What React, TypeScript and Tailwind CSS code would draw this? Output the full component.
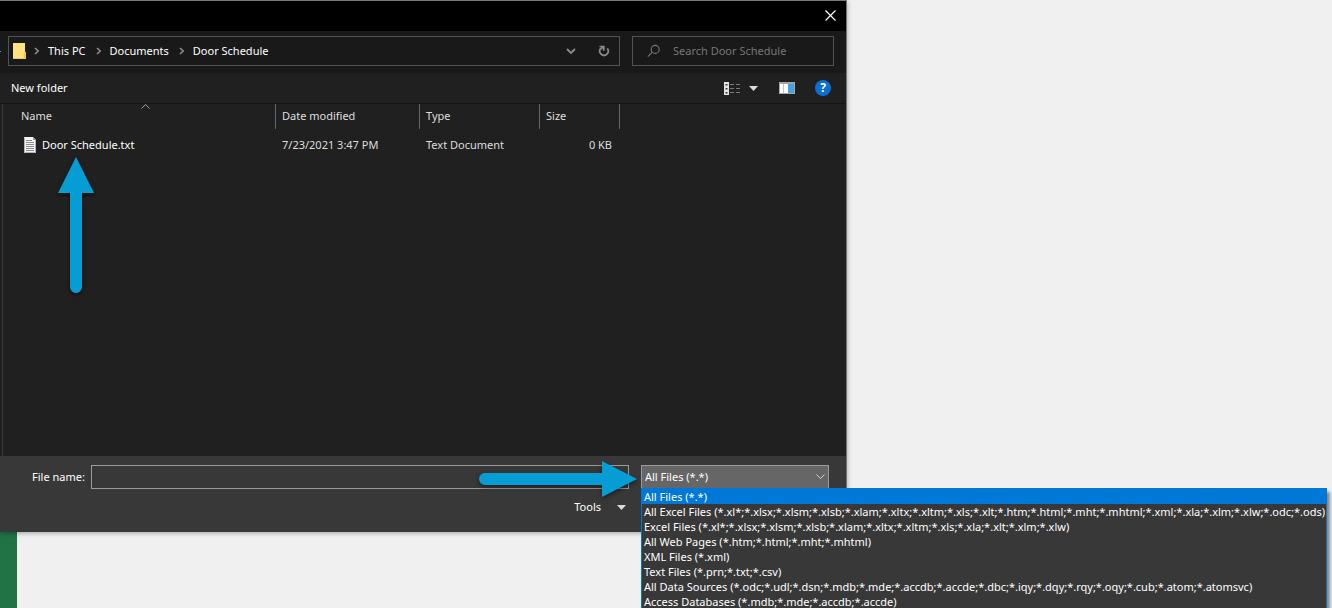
import React, { useState } from 'react';

const fileTypes = [
  'All Files (*.*)',
  'All Excel Files (*.xl*;*.xlsx;*.xlsm;*.xlsb;*.xlam;*.xltx;*.xltm;*.xls;*.xlt;*.htm;*.html;*.mht;*.mhtml;*.xml;*.xla;*.xlm;*.xlw;*.odc;*.ods)',
  'Excel Files (*.xl*;*.xlsx;*.xlsm;*.xlsb;*.xlam;*.xltx;*.xltm;*.xls;*.xla;*.xlt;*.xlm;*.xlw)',
  'All Web Pages (*.htm;*.html;*.mht;*.mhtml)',
  'XML Files (*.xml)',
  'Text Files (*.prn;*.txt;*.csv)',
  'All Data Sources (*.odc;*.udl;*.dsn;*.mdb;*.mde;*.accdb;*.accde;*.dbc;*.iqy;*.dqy;*.rqy;*.oqy;*.cub;*.atom;*.atomsvc)',
  'Access Databases (*.mdb;*.mde;*.accdb;*.accde)',
];

const files = [
  { name: 'Door Schedule.txt', modified: '7/23/2021 3:47 PM', type: 'Text Document', size: '0 KB' },
];

const path = ['This PC', 'Documents', 'Door Schedule'];

function Chevron() {
  return (
    <svg className="w-[6px] h-2 shrink-0" viewBox="0 0 6 8" fill="none" stroke="#8c8c8c" strokeWidth="1.6">
      <path d="M1 1l3.2 3L1 7" />
    </svg>
  );
}

function Triangle() {
  return (
    <svg className="w-[9px] h-[5px]" viewBox="0 0 9 5" fill="#dcdcdc">
      <path d="M0 0h9L4.5 5z" />
    </svg>
  );
}

function FolderIcon() {
  return (
    <svg className="w-[13px] h-4 shrink-0" viewBox="0 0 13 16">
      <path d="M0 0h12v9h1v7H0z" fill="#ffe284" />
      <path d="M10.5 16V10l1.5-1.5 1 .8V16z" fill="#f3c64a" />
      <path d="M0 15.5h13" stroke="#edc95c" />
    </svg>
  );
}

function TextFileIcon() {
  return (
    <svg className="w-3 h-4 shrink-0" viewBox="0 0 12 16">
      <path d="M0 0h9l3 3v13H0z" fill="#f4f4f4" />
      <path d="M9 0v3h3z" fill="#9a9a9a" />
      <path d="M2 3.5h6M2 5.5h8M2 7.5h8M2 9.5h8M2 11.5h8M2 13.5h8" stroke="#8c8c8c" />
      <path d="M.5.5v15h11V3" fill="none" stroke="#b5b5b5" />
    </svg>
  );
}

function ViewIcon() {
  return (
    <svg className="w-[17px] h-[13px]" viewBox="0 0 17 13">
      <path d="M0 0h5v13H0z" fill="#e4e4e4" />
      <path d="M1.5 2h2v1.5h-2zM1.5 6h2v1.5h-2zM1.5 10h2v1.5h-2z" fill="#3a3a3a" />
      <path d="M6 2.5h4M12 2.5h4M6 6.5h4M12 6.5h4M6 10.5h4M12 10.5h4" stroke="#7a7a7a" />
    </svg>
  );
}

function PreviewPaneIcon() {
  return (
    <svg className="w-4 h-3" viewBox="0 0 16 12">
      <path d="M0 0h16v12H0z" fill="#a6a6a6" />
      <path d="M1 2h8v9H1z" fill="#fff" />
      <path d="M4.5 2v9" stroke="#c4c4c4" />
      <path d="M9 2h6v9H9z" fill="#4a9fe0" />
      <path d="M11 1h1M13 1h2" stroke="#5aa9e6" />
    </svg>
  );
}

export default function App() {
  const [fileType, setFileType] = useState(fileTypes[0]);
  const [fileName, setFileName] = useState('');

  return (
    <main className="relative flex h-screen overflow-hidden bg-[#f0f0f0] font-['Noto_Sans','Open_Sans',sans-serif] text-[11px] text-white">
      {/* Workbook window behind the dialog */}
      <div className="w-[17px] bg-[#217346]" />

      {/* File dialog */}
      <section
        aria-label="Open"
        className="absolute top-0 left-0 w-full max-w-[847px] border-t border-r border-[#777] bg-[#202020] shadow-[0_1px_5px_rgba(0,0,0,0.35)]"
      >
        <header className="flex h-[30px] items-center justify-end bg-black pr-[10px] pb-[2px]">
          <button type="button" aria-label="Close">
            <svg className="w-[11px] h-[11px]" viewBox="0 0 11 11" stroke="#fff" strokeWidth="1.2">
              <path d="M.5.5l10 10M10.5.5l-10 10" />
            </svg>
          </button>
        </header>

        {/* Address bar and search */}
        <div className="flex h-[42px] items-center bg-[#191919] pr-3 pb-[2px]">
          <span className="mr-[7px] h-px w-px bg-[#8c8c8c]" />
          <nav className="flex h-[30px] flex-1 items-center border border-[#535353] px-1">
            <FolderIcon />
            <ol className="flex flex-1 items-center pl-2">
              {path.map((part) => (
                <li key={part} className="flex items-center gap-2 pr-[10px]">
                  <Chevron />
                  <a href="#">{part}</a>
                </li>
              ))}
            </ol>
            <button type="button" aria-label="Previous locations">
              <svg className="w-[10px] h-[7px]" viewBox="0 0 10 7" fill="none" stroke="#8c8c8c" strokeWidth="1.8">
                <path d="M1 1l4 4 4-4" />
              </svg>
            </button>
            <button type="button" aria-label="Refresh" className="ml-[22px] mr-[5px]">
              <svg className="w-3 h-3" viewBox="0 0 12 12" fill="none" stroke="#8c8c8c" strokeWidth="1.7">
                <path d="M9.2 3.4a4.2 4.2 0 1 1-6.6.2" />
                <path d="M1.5 1.5h4.3v4.3M5.6 1.8L2.6 4" />
              </svg>
            </button>
          </nav>
          <div className="ml-3 flex h-[30px] w-[202px] items-center gap-3 border border-[#535353] pl-[14px]">
            <svg className="w-[14px] h-[14px] shrink-0" viewBox="0 0 14 14" fill="none" stroke="#777" strokeWidth="1.1">
              <circle cx="8.2" cy="5.4" r="4" />
              <path d="M5.3 8.2L.8 12.7" />
            </svg>
            <input
              type="search"
              aria-label="Search Door Schedule"
              placeholder="Search Door Schedule"
              className="w-full min-w-0 bg-transparent outline-none placeholder:text-[#777]"
            />
          </div>
        </div>

        {/* Toolbar */}
        <div className="flex h-[31px] items-center border-b border-[#151515] pr-[15px] pl-[11px]">
          <button type="button">New folder</button>
          <button type="button" aria-label="Change your view" className="ml-auto flex items-center gap-2">
            <ViewIcon />
            <Triangle />
          </button>
          <button type="button" aria-label="Preview pane" className="ml-[21px]">
            <PreviewPaneIcon />
          </button>
          <button
            type="button"
            aria-label="Help"
            className="ml-5 flex h-4 w-4 items-center justify-center rounded-full bg-[#0a6fd0] text-xs font-bold"
          >
            ?
          </button>
        </div>

        {/* File list */}
        <div className="relative ml-[2px] min-h-[352px] border-l border-[#383838]">
          <table className="table-fixed border-separate border-spacing-0 text-left text-[#dedede]">
            <colgroup>
              <col className="w-[273px]" />
              <col className="w-[144px]" />
              <col className="w-[120px]" />
              <col className="w-[80px]" />
            </colgroup>
            <thead>
              <tr className="h-[25px]">
                <th className="relative border-r border-[#636363] pl-[18px] font-normal">
                  Name
                  <svg
                    className="absolute top-0 left-[138px] w-[9px] h-[5px]"
                    viewBox="0 0 9 5"
                    fill="none"
                    stroke="#a0a0a0"
                  >
                    <path d="M.5 4.5l4-4 4 4" />
                  </svg>
                </th>
                <th className="border-r border-[#636363] pl-[6px] font-normal">Date modified</th>
                <th className="border-r border-[#636363] pl-[6px] font-normal">Type</th>
                <th className="border-r border-[#636363] pl-[6px] font-normal">Size</th>
              </tr>
            </thead>
            <tbody>
              {files.map((file) => (
                <tr key={file.name} className="h-8">
                  <td className="pl-[21px] text-white">
                    <span className="flex items-center gap-[6px]">
                      <TextFileIcon />
                      {file.name}
                    </span>
                  </td>
                  <td className="pl-[6px]">{file.modified}</td>
                  <td className="pl-[6px]">{file.type}</td>
                  <td className="pr-2 text-right">{file.size}</td>
                </tr>
              ))}
            </tbody>
          </table>
          {/* Arrow to the file */}
          <svg
            className="absolute top-[53px] left-[54px] w-[38px] h-[140px] drop-shadow-[0_2px_2px_rgba(0,0,0,0.5)]"
            viewBox="0 0 38 140"
            fill="#069dd5"
          >
            <path d="M19 0l18 36H25v94a6 6 0 0 1-12 0V36H1z" />
          </svg>
        </div>

        {/* File name and type */}
        <footer className="h-[76px] bg-[#383838] pt-[9px]">
          <div className="flex items-start pr-[17px] pl-8">
            <label htmlFor="file-name" className="w-[59px] shrink-0 leading-6 whitespace-nowrap">
              File name:
            </label>
            <input
              id="file-name"
              value={fileName}
              onChange={(e) => setFileName(e.target.value)}
              className="h-6 min-w-0 flex-1 border border-[#9b9b9b] bg-[#383838] px-1 outline-none"
            />
            <div className="relative ml-3 w-[188px]">
              <select
                aria-label="File type"
                value={fileType}
                onChange={(e) => setFileType(e.target.value)}
                className="block h-6 w-full appearance-none border border-[#9b9b9b] bg-[#666] pr-5 pl-[3px] outline-none"
              >
                {fileTypes.map((type) => (
                  <option key={type}>{type}</option>
                ))}
              </select>
              <svg
                className="pointer-events-none absolute top-[9px] right-1 w-[9px] h-[6px]"
                viewBox="0 0 9 6"
                fill="none"
                stroke="#d0d0d0"
              >
                <path d="M.5.5l4 4 4-4" />
              </svg>
              <ul
                role="listbox"
                aria-label="File types"
                className="absolute top-[23px] left-0 z-10 w-[686px] border border-[#0078d7] bg-[#383838] leading-[15px] whitespace-nowrap shadow-[3px_4px_3px_rgba(0,0,0,0.45)]"
              >
                {fileTypes.map((type) => (
                  <li
                    key={type}
                    role="option"
                    aria-selected={type === fileType}
                    onClick={() => setFileType(type)}
                    className="pl-[2px] aria-selected:bg-[#0078d7]"
                  >
                    {type}
                  </li>
                ))}
              </ul>
              {/* Arrow to the file type list */}
              <svg
                className="absolute -top-[4px] right-[192px] w-[158px] h-[38px] drop-shadow-[0_2px_2px_rgba(0,0,0,0.5)]"
                viewBox="0 0 158 38"
                fill="#069dd5"
              >
                <path d="M158 18l-35 18V24H6a6 6 0 0 1 0-12h117V0z" />
              </svg>
            </div>
          </div>
          <div className="flex h-9 items-center justify-end pr-[220px]">
            <button type="button" className="flex items-center gap-4">
              Tools
              <Triangle />
            </button>
          </div>
        </footer>
      </section>
    </main>
  );
}
